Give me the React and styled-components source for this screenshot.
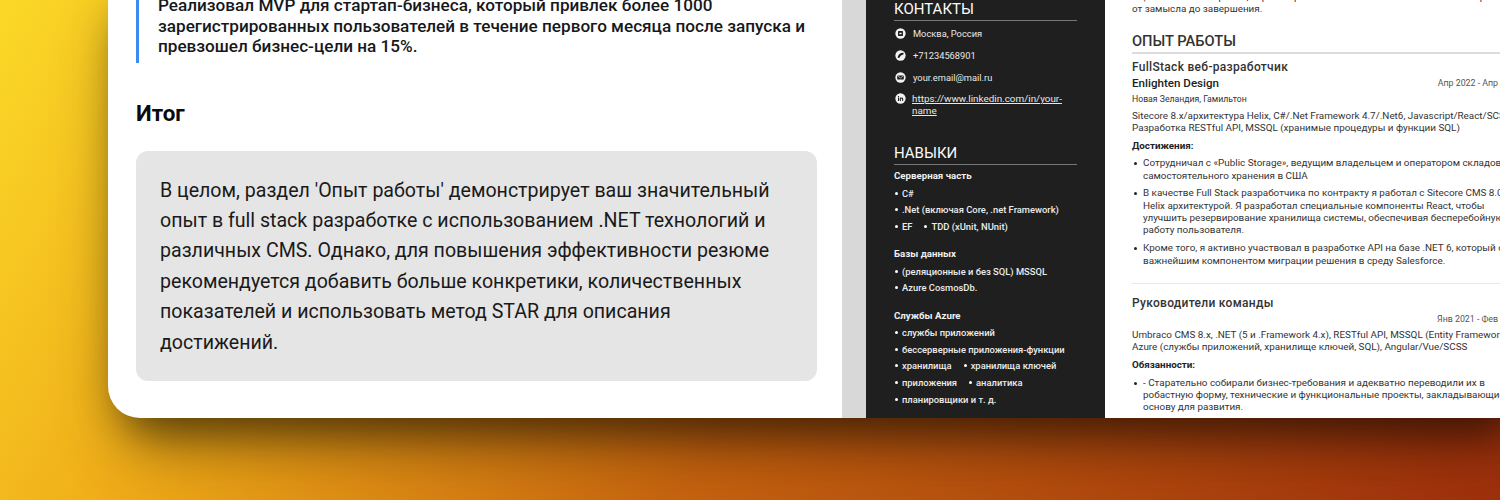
import styled, { createGlobalStyle } from "styled-components";

const GlobalStyle = createGlobalStyle`
  html, body { margin: 0; padding: 0; }
  body {
    width: 1500px;
    height: 500px;
    overflow: hidden;
    font-family: Roboto, "Liberation Sans", sans-serif;
  }
`;

const Stage = styled.div`
  width: 1500px;
  height: 500px;
  overflow: hidden;
  padding-left: 108px;
  box-sizing: border-box;
  background: linear-gradient(120deg, #fbd928 0%, #eea516 26%, #c8640f 54%, #a0300c 100%);
`;

const Window = styled.div`
  display: flex;
  width: 1392px;
  height: 418px;
  background: #fff;
  border-bottom-left-radius: 32px;
  box-shadow: 14px 14px 42px rgba(0, 0, 0, 0.5), 14px 30px 70px rgba(0, 0, 0, 0.3);
`;

const Article = styled.div`
  width: 734px;
  flex: none;
  height: 418px;
  box-sizing: border-box;
  padding: 0 25px 37px 28px;
  display: flex;
  flex-direction: column;
  justify-content: flex-end;
  overflow: hidden;
  border-bottom-left-radius: 32px;
  & > * { flex: none; }
`;

const Quote = styled.div`
  border-left: 3px solid #3b8bf0;
  padding: 0 0 6px 19px;
  margin-bottom: 35px;
  font-size: 17.15px;
  font-weight: 500;
  line-height: 20.5px;
  color: #16181c;
  white-space: nowrap;
`;

const Heading = styled.h2`
  margin: 0 0 23px;
  font-size: 22.4px;
  line-height: 30px;
  font-weight: 700;
  color: #0b0b0b;
`;

const Summary = styled.div`
  background: #e5e5e5;
  border-radius: 12px;
  padding: 25px 24px 23px;
  font-size: 19.58px;
  line-height: 30.4px;
  color: #1a1a1a;
  white-space: nowrap;
`;

const Gutter = styled.div`
  width: 24px;
  flex: none;
  background: #d8d8d8;
`;

const Sidebar = styled.aside`
  width: 239px;
  height: 418px;
  flex: none;
  box-sizing: border-box;
  padding: 0 28px 10.7px;
  background: #1f1f1f;
  color: #f2f2f2;
  display: flex;
  flex-direction: column;
  justify-content: flex-end;
  overflow: hidden;
  & > * { flex: none; }
`;

const SideTitle = styled.div`
  font-size: 15px;
  line-height: 18px;
  padding-bottom: 2px;
  border-bottom: 1px solid #777;
  margin-top: ${(p) => p.$top || 0}px;
  margin-bottom: 5px;
  color: #fafafa;
`;

const Contact = styled.div`
  display: flex;
  align-items: flex-start;
  gap: 7px;
  font-size: 9.3px;
  line-height: 12px;
  padding-left: 1px;
  margin-top: ${(p) => p.$top || 10}px;
  color: #e8e8e8;
  svg { flex: none; width: 11px; height: 11px; }
`;

const ContactLink = styled.a`
  color: #e8e8e8;
  text-decoration: underline;
  font-size: 9.9px;
  margin-left: -1px;
`;

const Group = styled.div`
  font-size: 9.7px;
  font-weight: 700;
  line-height: 12px;
  margin-top: ${(p) => p.$top ?? 13.6}px;
  margin-bottom: 2.7px;
  color: #f0f0f0;
`;

const SkillRow = styled.div`
  display: flex;
  gap: 11px;
  height: 16.6px;
  align-items: center;
  font-size: 9.4px;
  font-weight: 500;
  color: #ececec;
`;

const Skill = styled.span`
  display: flex;
  align-items: center;
  gap: 4px;
  white-space: nowrap;
  &::before {
    content: "";
    width: 3px;
    height: 3px;
    border-radius: 50%;
    background: #fff;
    margin-left: 1px;
  }
`;

const Paper = styled.main`
  flex: 1;
  height: 418px;
  overflow: hidden;
  display: flex;
  flex-direction: column;
  justify-content: flex-end;
  padding-left: 27px;
  color: #2b2b2b;
  background: #fff;
`;

const PaperInner = styled.div`
  flex: none;
  width: 388px;
  font-size: 9.9px;
  line-height: 12.3px;
  white-space: nowrap;
`;

const Section = styled.div`
  font-size: 14.7px;
  line-height: 17px;
  margin-top: 17.5px;
  padding-bottom: 2px;
  border-bottom: 2px solid #dcdcdc;
  color: #333;
  font-weight: 500;
`;

const JobTitle = styled.div`
  font-size: 12px;
  font-weight: 500;
  letter-spacing: 0.3px;
  line-height: 14px;
  margin-top: ${(p) => p.$top || 5.5}px;
  color: #333;
`;

const SpaceRow = styled.div`
  display: flex;
  justify-content: space-between;
  align-items: center;
  margin-top: ${(p) => p.$top || 3}px;
  min-height: 14px;
  color: #444;
`;

const Company = styled.span`
  font-size: 11.6px;
  font-weight: 500;
  color: #222;
`;

const Dates = styled.span`
  font-size: 8.8px;
  margin-left: auto;
  color: #555;
`;

const Place = styled.div`
  font-size: 8.7px;
  line-height: 12px;
  margin-top: 2px;
  color: #333;
`;

const Para = styled.div`
  margin-top: ${(p) => p.$top || 5}px;
  color: #333;
`;

const Label = styled.div`
  font-weight: 700;
  font-size: 9.8px;
  margin-top: 5.5px;
  color: #222;
`;

const Bullets = styled.ul`
  margin: 5.4px 0 0;
  padding: 0 0 0 11px;
  list-style: none;
`;

const Bullet = styled.li`
  position: relative;
  margin-bottom: 5.6px;
  color: #333;
  &:last-child { margin-bottom: 4.3px; }
  &::before {
    content: "";
    position: absolute;
    left: -9px;
    top: 5px;
    width: 3px;
    height: 3px;
    border-radius: 50%;
    background: #222;
  }
`;

const Divider = styled.hr`
  border: 0;
  border-top: 1px solid #e8e8e8;
  margin: 16.4px 0 0;
`;

const Dot = ({ children }) => (
  <svg viewBox="0 0 12 12">
    <circle cx="6" cy="6" r="5.6" fill="#f2f2f2" />
    {children}
  </svg>
);

export default function App() {
  return (
    <Stage>
      <GlobalStyle />
      <Window>
        <Article>
          <Quote>
            Реализовал MVP для стартап-бизнеса, который привлек более 1000
            <br />
            зарегистрированных пользователей в течение первого месяца после запуска и
            <br />
            превзошел бизнес-цели на 15%.
          </Quote>
          <Heading>Итог</Heading>
          <Summary>
            В целом, раздел 'Опыт работы' демонстрирует ваш значительный
            <br />
            опыт в full stack разработке с использованием .NET технологий и
            <br />
            различных CMS. Однако, для повышения эффективности резюме
            <br />
            рекомендуется добавить больше конкретики, количественных
            <br />
            показателей и использовать метод STAR для описания
            <br />
            достижений.
          </Summary>
        </Article>
        <Gutter />
        <Sidebar>
          <SideTitle>КОНТАКТЫ</SideTitle>
          <Contact $top={2}>
            <Dot>
              <rect x="3.3" y="3.4" width="5.4" height="5.2" rx="0.7" fill="#1f1f1f" />
              <rect x="4.8" y="5.2" width="2.4" height="1.6" fill="#f2f2f2" />
            </Dot>
            Москва, Россия
          </Contact>
          <Contact>
            <Dot>
              <path d="M2.8 8.4C3.2 5.2 5.6 3 9.2 3L9.4 4.7 7.8 5.4C6.6 5.6 5.8 6.4 5.4 7.6L4.4 8.8Z" fill="#1f1f1f" />
            </Dot>
            +71234568901
          </Contact>
          <Contact>
            <Dot>
              <rect x="2.4" y="3.7" width="7.2" height="4.6" rx="1" fill="#1f1f1f" />
              <path d="M3 4.4 6 6.5 9 4.4" fill="none" stroke="#f2f2f2" strokeWidth="0.7" />
            </Dot>
            your.email@mail.ru
          </Contact>
          <Contact $top={9}>
            <Dot>
              <path d="M3.2 5h1.2v3.6H3.2zM3.2 3.2h1.2v1.1H3.2zM5.2 5h1.1v.5c.7-.9 2.6-.8 2.6 1v2.1H7.8V6.8c0-1-1.4-1-1.4 0v1.8H5.2z" fill="#1f1f1f" />
            </Dot>
            <ContactLink href="#linkedin">
              https://www.linkedin.com/in/your-
              <br />
              name
            </ContactLink>
          </Contact>
          <SideTitle $top={27}>НАВЫКИ</SideTitle>
          <Group $top={0}>Серверная часть</Group>
          <SkillRow><Skill>C#</Skill></SkillRow>
          <SkillRow><Skill>.Net (включая Core, .net Framework)</Skill></SkillRow>
          <SkillRow><Skill>EF</Skill><Skill>TDD (xUnit, NUnit)</Skill></SkillRow>
          <Group>Базы данных</Group>
          <SkillRow><Skill>(реляционные и без SQL) MSSQL</Skill></SkillRow>
          <SkillRow><Skill>Azure CosmosDb.</Skill></SkillRow>
          <Group>Службы Azure</Group>
          <SkillRow><Skill>службы приложений</Skill></SkillRow>
          <SkillRow><Skill>бессерверные приложения-функции</Skill></SkillRow>
          <SkillRow><Skill>хранилища</Skill><Skill>хранилища ключей</Skill></SkillRow>
          <SkillRow><Skill>приложения</Skill><Skill>аналитика</Skill></SkillRow>
          <SkillRow><Skill>планировщики и т. д.</Skill></SkillRow>
        </Sidebar>
        <Paper>
          <PaperInner>
            <Para>
              Тщательно спланировал, спроектировал и воплотил в жизнь множество проектов
              <br />
              от замысла до завершения.
            </Para>
            <Section>ОПЫТ РАБОТЫ</Section>
            <JobTitle>FullStack веб-разработчик</JobTitle>
            <SpaceRow>
              <Company>Enlighten Design</Company>
              <Dates>Апр 2022 - Апр 2024</Dates>
            </SpaceRow>
            <Place>Новая Зеландия, Гамильтон</Place>
            <Para>
              Sitecore 8.x/архитектура Helix, C#/.Net Framework 4.7/.Net6, Javascript/React/SCSS
              <br />
              Разработка RESTful API, MSSQL (хранимые процедуры и функции SQL)
            </Para>
            <Label>Достижения:</Label>
            <Bullets>
              <Bullet>
                Сотрудничал с «Public Storage», ведущим владельцем и оператором складов
                <br />
                самостоятельного хранения в США
              </Bullet>
              <Bullet>
                В качестве Full Stack разработчика по контракту я работал с Sitecore CMS 8.0 и
                <br />
                Helix архитектурой. Я разработал специальные компоненты React, чтобы
                <br />
                улучшить резервирование хранилища системы, обеспечивая бесперебойную
                <br />
                работу пользователя.
              </Bullet>
              <Bullet>
                Кроме того, я активно участвовал в разработке API на базе .NET 6, который стал
                <br />
                важнейшим компонентом миграции решения в среду Salesforce.
              </Bullet>
            </Bullets>
            <Divider />
            <JobTitle $top={12}>Руководители команды</JobTitle>
            <SpaceRow $top={1.5}>
              <Dates>Янв 2021 - Фев 2022</Dates>
            </SpaceRow>
            <Para $top={3.3}>
              Umbraco CMS 8.x, .NET (5 и .Framework 4.x), RESTful API, MSSQL (Entity Framework)
              <br />
              Azure (службы приложений, хранилище ключей, SQL), Angular/Vue/SCSS
            </Para>
            <Label>Обязанности:</Label>
            <Bullets>
              <Bullet>
                - Старательно собирали бизнес-требования и адекватно переводили их в
                <br />
                робастную форму, технические и функциональные проекты, закладывающие
                <br />
                основу для развития.
              </Bullet>
            </Bullets>
          </PaperInner>
        </Paper>
      </Window>
    </Stage>
  );
}
